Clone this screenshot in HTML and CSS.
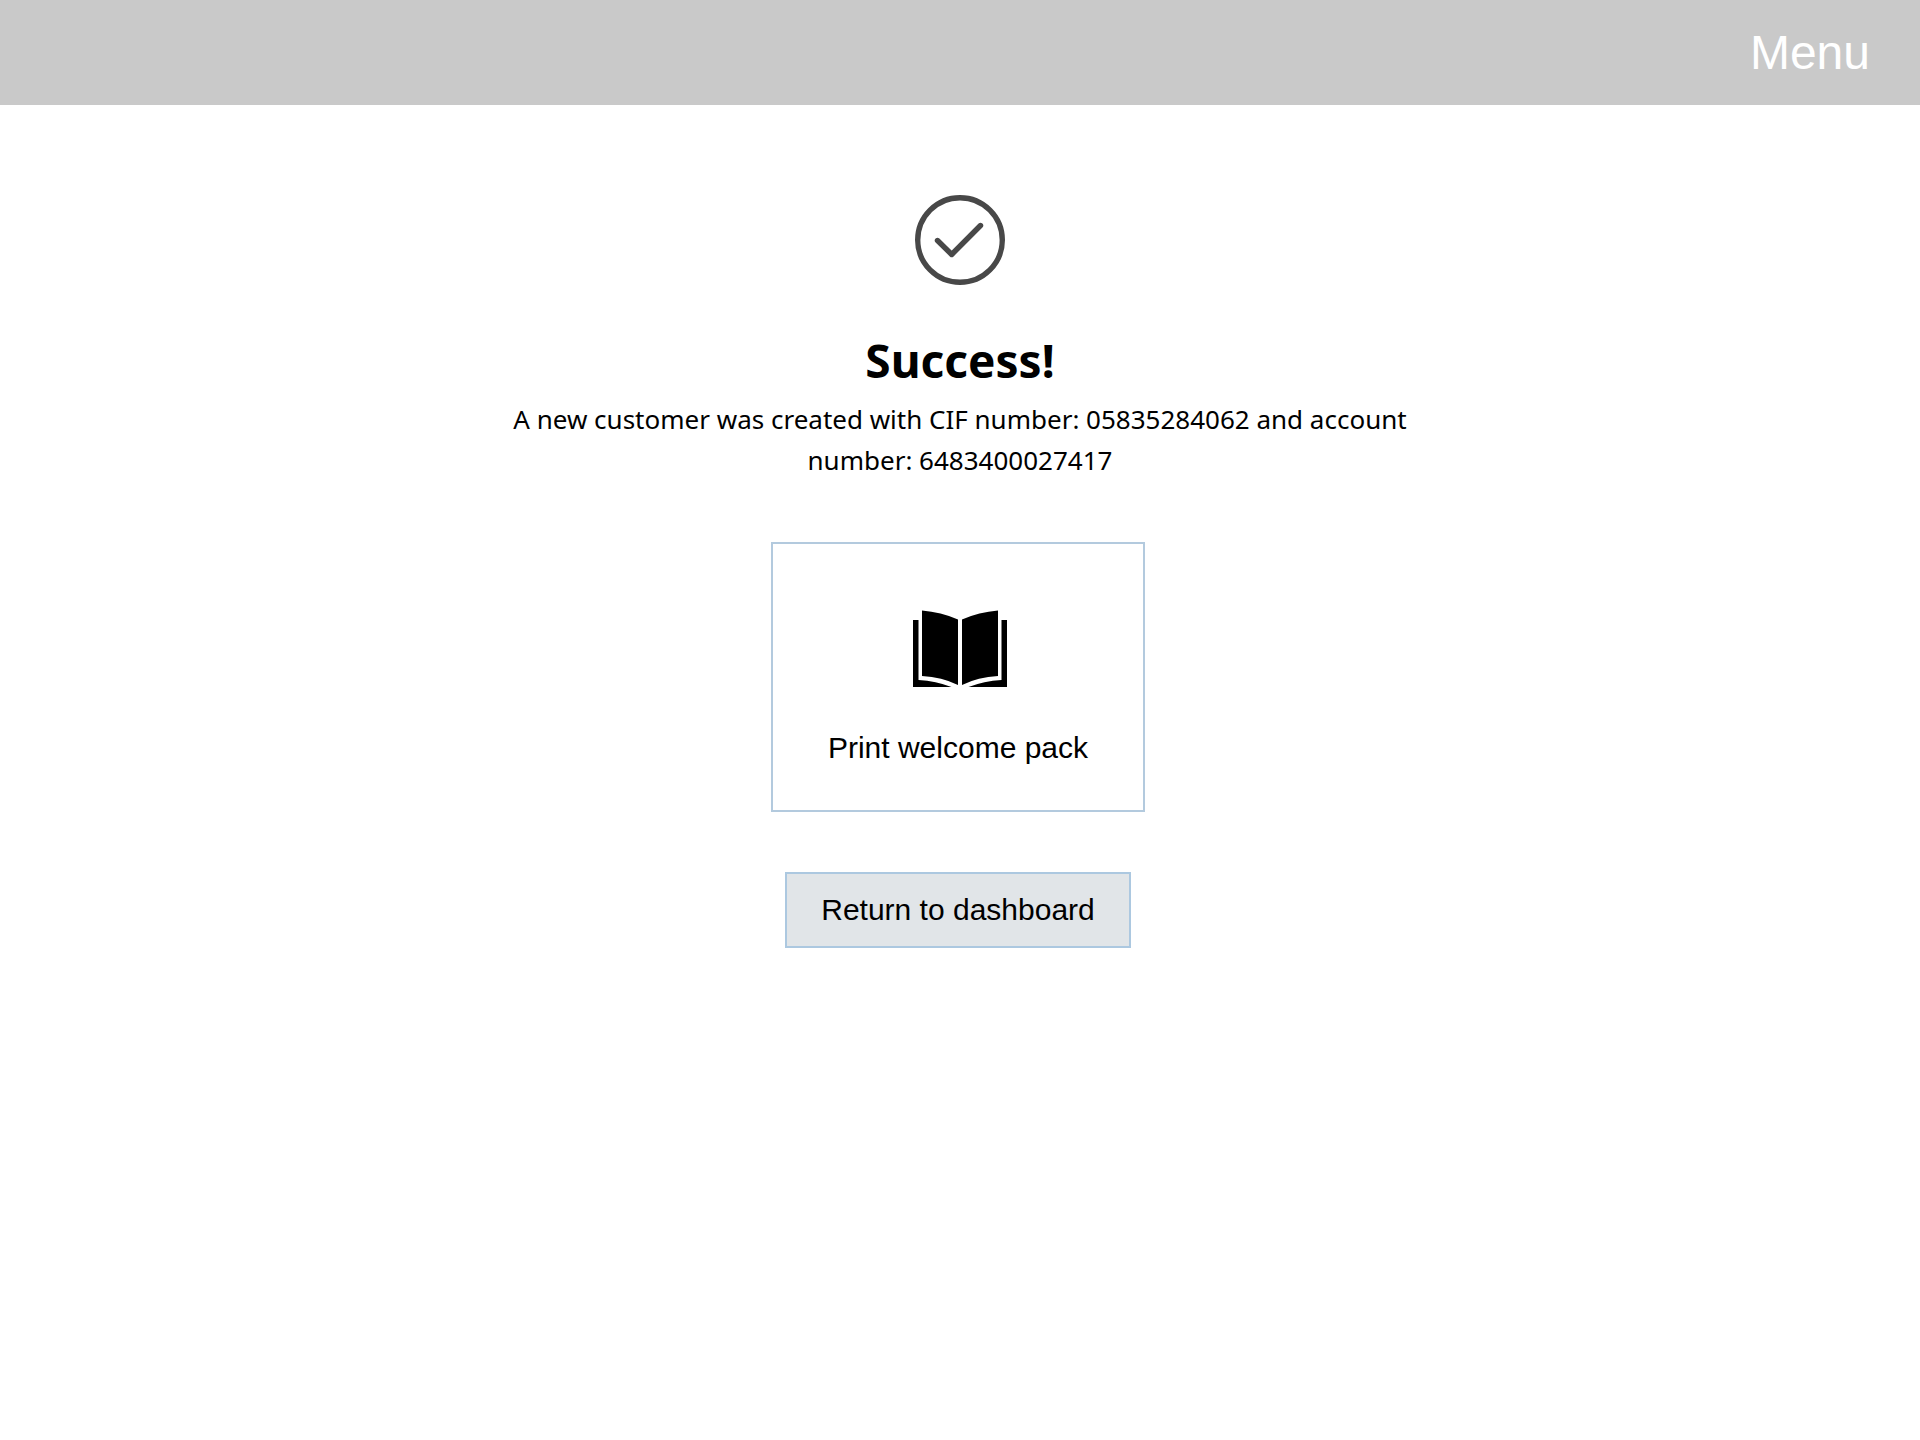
FILE: index.html
```html
<!DOCTYPE html>
<html lang="en">
<head>
    <meta charset="UTF-8">
    <meta name="viewport" content="width=device-width, initial-scale=1.0">
    <title>Success</title>
    <link rel="stylesheet" href="styles.css">
</head>
<body>
    <header class="header">
        <button type="button" class="menu-button">Menu</button>
    </header>

    <main class="content">
        <svg class="check-icon" viewBox="0 0 90 90" aria-hidden="true">
            <circle cx="45" cy="45" r="42.3"/>
            <path d="M22.5 45.5L36.7 59.5L65.5 30.5"/>
        </svg>
        <h1>Success!</h1>
        <p class="message">A new customer was created with CIF number: 05835284062 and account number: 6483400027417</p>

        <!-- Actions -->
        <div class="actions">
            <button type="button" class="card">
                <svg class="book-icon" viewBox="0 0 98 77" aria-hidden="true">
                    <path d="M13 .5Q32 2 49 9.5V75Q33 67 13 66Z"/>
                    <path d="M89 .5Q70 2 53 9.5V75Q69 67 89 66Z"/>
                    <path d="M4 10H9.5V70Q27 71 42.5 77H4Z"/>
                    <path d="M98 10H92.5V70Q75 71 59.5 77H98Z"/>
                </svg>
                <span>Print welcome pack</span>
            </button>
            <button type="button" class="return-button">Return to dashboard</button>
        </div>
    </main>
</body>
</html>
```

FILE: styles.css
```css
/* Basic styling */
* {
    box-sizing: border-box;
}
body {
    font-family: "Noto Sans", sans-serif;
    margin: 0;
    background-color: #fff;
    color: #000;
}
button {
    font-family: "Liberation Sans", Arial, sans-serif;
    font-size: 30px;
    line-height: 36px;
    color: #000;
    cursor: pointer;
}

/* Header */
.header {
    display: flex;
    justify-content: flex-end;
    padding: 24px 50px;
    background-color: #c9c9c9;
}
.menu-button {
    padding: 0;
    border: none;
    background: none;
    color: #fff;
    font-size: 48px;
    line-height: 57px;
}

/* Content */
.content {
    display: flex;
    flex-direction: column;
    align-items: center;
    padding: 90px 24px;
    text-align: center;
}
.check-icon {
    width: 90px;
    fill: none;
    stroke: #484848;
    stroke-width: 5.4;
    stroke-linecap: round;
    stroke-linejoin: round;
}
h1 {
    margin: 44px 0 8px;
    font-size: 46px;
    line-height: 62px;
}
.message {
    max-width: 960px;
    margin: 0;
    font-size: 26px;
    line-height: 41px;
}

/* Actions */
.actions {
    display: flex;
    flex-direction: column;
    align-items: center;
    gap: 60px;
    margin-top: 61px;
    padding-right: 4px;
}
.card {
    display: flex;
    flex-direction: column;
    align-items: center;
    gap: 43px;
    padding: 66px 55px 44px;
    border: 2px solid #b3cade;
    background-color: #fff;
}
.book-icon {
    width: 98px;
}
.return-button {
    padding: 18px 34px;
    border: 2px solid #acc8e0;
    background-color: #e1e5e8;
}
```
